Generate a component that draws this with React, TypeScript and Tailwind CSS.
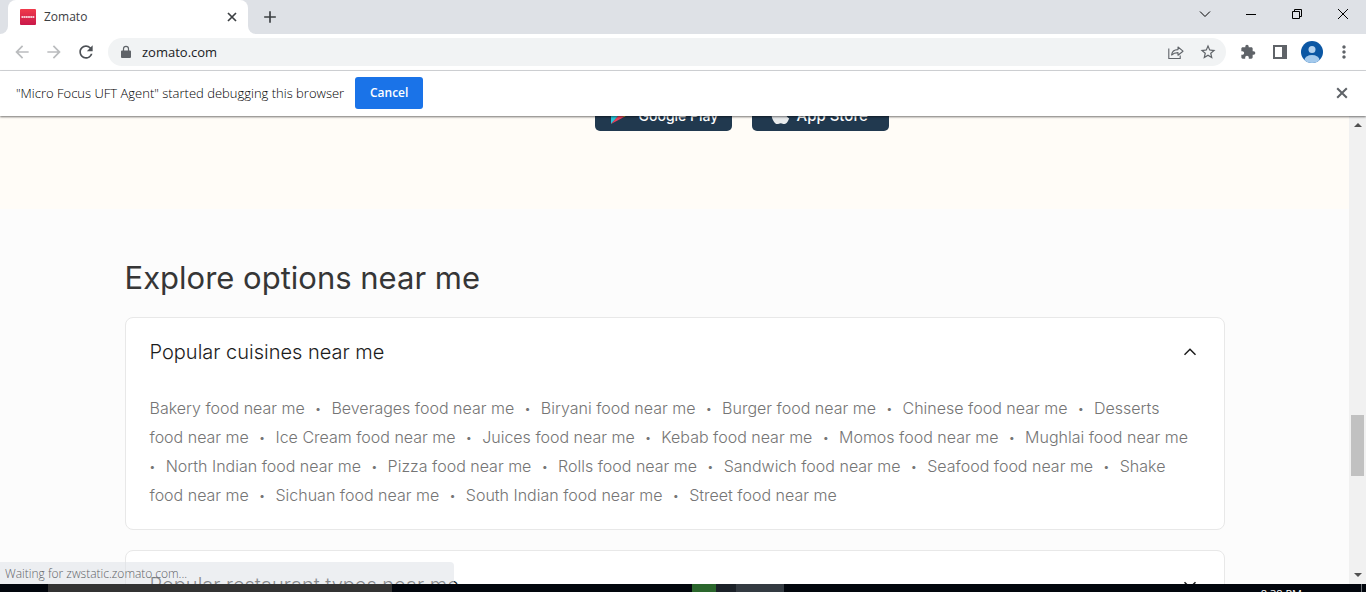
import { useState } from "react";
import {
  MdArrowBack,
  MdArrowForward,
  MdExtension,
  MdMoreVert,
  MdAdd,
  MdRefresh,
  MdStarBorder,
} from "react-icons/md";

const cuisines = [
  "Bakery",
  "Beverages",
  "Biryani",
  "Burger",
  "Chinese",
  "Desserts",
  "Ice Cream",
  "Juices",
  "Kebab",
  "Momos",
  "Mughlai",
  "North Indian",
  "Pizza",
  "Rolls",
  "Sandwich",
  "Seafood",
  "Shake",
  "Sichuan",
  "South Indian",
  "Street",
];

function Cross({ size }: { size: number }) {
  return (
    <svg width={size} height={size} viewBox="0 0 10 10" fill="none" stroke="currentColor" strokeWidth="1.7" aria-hidden="true">
      <path d="M1 1l8 8M9 1L1 9" />
    </svg>
  );
}

function TabStrip() {
  return (
    <header className="flex h-[34px] shrink-0 items-end bg-[#dee1e6]">
      <div className="flex h-full w-2 shrink-0 items-end bg-white">
        <div className="h-full w-full rounded-br-lg bg-[#dee1e6]" />
      </div>
      <div className="h-full">
        <div className="flex h-full w-60 items-center rounded-t-lg bg-white pr-2 pl-3">
          <Favicon />
          <span className="ml-2 flex-1 text-[12px] text-[#3c4043]">Zomato</span>
          <button type="button" aria-label="Close tab" className="grid size-4 place-items-center text-[#3c4043]">
            <Cross size={10} />
          </button>
        </div>
      </div>
      <div className="h-full w-2 shrink-0 bg-white">
        <div className="h-full w-full rounded-bl-lg bg-[#dee1e6]" />
      </div>
      <button type="button" aria-label="New tab" className="ml-1 grid h-full w-5 place-items-center text-[#3c4043]">
        <MdAdd size={20} />
      </button>
      <div className="ml-auto flex h-full items-center pb-1.5 text-black">
        <button type="button" aria-label="Search tabs" className="grid h-full w-[46px] place-items-center">
          <svg width="12" height="12" viewBox="0 0 12 12" fill="none" stroke="currentColor">
            <path d="M1 3.5l5 5 5-5" />
          </svg>
        </button>
        <button type="button" aria-label="Minimize" className="grid h-full w-[46px] place-items-center">
          <svg width="12" height="12" viewBox="0 0 12 12" fill="currentColor">
            <path d="M1 6h10v1H1z" />
          </svg>
        </button>
        <button type="button" aria-label="Restore" className="grid h-full w-[46px] place-items-center">
          <svg width="12" height="12" viewBox="0 0 12 12" fill="none" stroke="currentColor">
            <path d="M1.5 3.5h7v7h-7zM3.5 3.5v-2h7v7h-2" />
          </svg>
        </button>
        <button type="button" aria-label="Close window" className="grid h-full w-[46px] place-items-center">
          <svg width="12" height="12" viewBox="0 0 12 12" fill="none" stroke="currentColor">
            <path d="M1 1l10 10M11 1L1 11" />
          </svg>
        </button>
      </div>
    </header>
  );
}

function Favicon() {
  return (
    <svg width="16" height="16" viewBox="0 0 16 16" aria-hidden="true">
      <defs>
        <linearGradient id="fav" x1="0" y1="0" x2="0" y2="1">
          <stop offset="0" stopColor="#f03a4b" />
          <stop offset="1" stopColor="#c9184a" />
        </linearGradient>
      </defs>
      <rect width="16" height="16" rx="1" fill="url(#fav)" />
      <path d="M1.500 8h13" stroke="#fff" strokeOpacity="0.75" strokeWidth="1.800" strokeDasharray="1.800 .4" />
    </svg>
  );
}

function Toolbar() {
  return (
    <nav aria-label="Browser" className="flex h-[37px] shrink-0 items-center border-b border-[#d5d7da] bg-white px-3">
      <button type="button" aria-label="Back" className="grid size-5 place-items-center text-[#babcbe]">
        <MdArrowBack size={20} />
      </button>
      <button type="button" aria-label="Forward" className="ml-3 grid size-5 place-items-center text-[#babcbe]">
        <MdArrowForward size={20} />
      </button>
      <button type="button" aria-label="Reload" className="ml-3 grid size-5 place-items-center text-[#4d5156]">
        <MdRefresh size={20} />
      </button>
      <div className="ml-3 flex h-7 flex-1 items-center rounded-full bg-[#f1f3f4] pr-2 pl-3 text-[#5f6368]">
        <svg width="12" height="14" viewBox="0 0 12 14" aria-hidden="true">
          <path d="M2 5.500h8a1 1 0 0 1 1 1V12a1 1 0 0 1-1 1H2a1 1 0 0 1-1-1V6.500a1 1 0 0 1 1-1z" fill="currentColor" />
          <path d="M3.500 6V3.800a2.500 2.500 0 0 1 5 0V6" fill="none" stroke="currentColor" strokeWidth="1.200" />
        </svg>
        <input
          aria-label="Address"
          defaultValue="zomato.com"
          className="ml-[10px] h-full min-w-0 flex-1 bg-transparent text-[13px] text-[#202124] outline-none"
        />
        <button type="button" aria-label="Share" className="mr-[14px] grid size-4 place-items-center">
          <svg width="16" height="16" viewBox="0 0 16 16" fill="none" stroke="currentColor" strokeWidth="1.1">
            <path d="M.8 4.500v10h11.400V11.500" />
            <path d="M3.600 11c.3-3.600 2.600-5.300 6.400-5.400V3l5 4.200-5 4V8.600c-2.800 0-4.800.7-6.400 2.400z" strokeLinejoin="round" />
          </svg>
        </button>
        <button type="button" aria-label="Bookmark" className="grid size-5 place-items-center">
          <MdStarBorder size={18} />
        </button>
      </div>
      <button type="button" aria-label="Extensions" className="ml-3 grid size-5 place-items-center text-[#5f6368]">
        <MdExtension size={16} />
      </button>
      <button type="button" aria-label="Side panel" className="ml-3 grid size-5 place-items-center text-[#5f6368]">
        <svg width="14" height="14" viewBox="0 0 14 14">
          <path d="M0 0h14v14H0z" fill="currentColor" />
          <path d="M2 2h7v10H2z" fill="#fff" />
        </svg>
      </button>
      <button type="button" aria-label="Profile" className="ml-[11px] grid size-[22px] place-items-center">
        <svg width="22" height="22" viewBox="0 0 22 22">
          <defs>
            <clipPath id="avatar">
              <circle cx="11" cy="11" r="11" />
            </clipPath>
          </defs>
          <g clipPath="url(#avatar)">
            <path d="M0 0h22v22H0z" fill="#0b57a4" />
            <circle cx="11" cy="8.500" r="3.500" fill="#b4d2ee" />
            <ellipse cx="11" cy="19" rx="7.500" ry="5" fill="#a3c9ec" />
          </g>
        </svg>
      </button>
      <button type="button" aria-label="Menu" className="ml-[11px] grid size-5 place-items-center text-[#5f6368]">
        <MdMoreVert size={20} />
      </button>
    </nav>
  );
}

function InfoBar() {
  return (
    <section className="relative z-10 flex h-[45px] shrink-0 items-start bg-white px-4 pt-1.5 shadow-[0_1px_2px_rgba(0,0,0,0.55)]">
      <p className="text-[13px] leading-8 font-light text-black">"Micro Focus UFT Agent" started debugging this browser</p>
      <button
        type="button"
        className="ml-[11px] h-8 w-[68px] rounded-[3px] bg-[#1a73e8] text-[12px] font-semibold text-white"
      >
        Cancel
      </button>
      <button type="button" aria-label="Dismiss" className="ml-auto grid h-8 w-4 place-items-center text-[#5f6368]">
        <Cross size={12} />
      </button>
    </section>
  );
}

function StoreBadges() {
  return (
    <div className="-mt-[25px] flex gap-5 pl-[470px] text-[15px] leading-5 font-medium text-white">
      <a href="#play" className="flex h-10 w-[137px] items-end rounded-[5px] bg-[#21394f] pb-[5px] pl-4">
        <svg width="18" height="20" viewBox="0 0 18 20" className="mb-[2px] shrink-0" aria-hidden="true">
          <path d="M0 0v20l9-10z" fill="#27c4d9" />
          <path d="M0 20l9-10 4 3z" fill="#e9435e" />
          <path d="M0 0l9 10 4-3z" fill="#32bb6e" />
          <path d="M13 7l5 3-5 3-4-3z" fill="#f7b916" />
        </svg>
        <span className="ml-[10px] text-[14px] whitespace-nowrap">Google Play</span>
      </a>
      <a href="#apple" className="flex h-10 w-[137px] items-end rounded-[5px] bg-[#21394f] pb-[5px] pl-4">
        <svg width="22" height="24" viewBox="0 0 22 24" className="mb-px shrink-0 text-[#e8ebed]" aria-hidden="true">
          <path
            d="M18 12.700c0-2.500 2-3.700 2.200-3.800-1.300-1.800-3.200-2.100-3.900-2.100-1.700-.2-3.200 1-4 1s-2.100-1-3.500-1C7 6.900 5.300 7.900 4.400 9.500c-1.900 3.300-.5 8.200 1.400 10.900.9 1.300 2 2.800 3.400 2.700s1.900-.9 3.600-.9 2.100.9 3.600.8 2.400-1.300 3.300-2.600c1-1.500 1.500-3 1.500-3.100-.1 0-3.200-1.200-3.200-4.600zM15.500 5.200c.7-.9 1.200-2.200 1.100-3.400-1.100 0-2.400.7-3.200 1.600-.7.800-1.300 2.100-1.100 3.300 1.200.1 2.400-.6 3.200-1.500z"
            fill="currentColor"
          />
        </svg>
        <span className="ml-[7px] whitespace-nowrap">App Store</span>
      </a>
    </div>
  );
}

function Chevron({ open }: { open: boolean }) {
  return (
    <svg width="14" height="8" viewBox="0 0 14 8" fill="none" stroke="#1c1c1c" strokeWidth="1.500" aria-hidden="true">
      <path d={open ? "M1.500 6.800L7 1.300l5.500 5.500" : "M1.500 1.200L7 6.700l5.500-5.500"} />
    </svg>
  );
}

function Accordion({ title, items, initial }: { title: string; items: string[]; initial: boolean }) {
  const [open, setOpen] = useState(initial);
  return (
    <section className="rounded-lg border border-[#e8e8e8] bg-white px-6">
      <h3>
        <button
          type="button"
          aria-expanded={open}
          onClick={() => setOpen(!open)}
          className="flex h-[67px] w-full items-center justify-between pr-[3px] text-left text-[20px] font-light text-[#1c1c1c]"
        >
          {title}
          <Chevron open={open} />
        </button>
      </h3>
      {open && (
        <p className="pt-[9px] pr-1 pb-[19px] text-[16px] leading-[29px] font-light text-[#757575]">
          {items.map((name, i) => (
            <span key={name}>
              <a href="#cuisine" className={i < items.length - 1 ? "pr-[6px]" : ""}>
                {name} food near me
              </a>
              {i < items.length - 1 && (
                <>
                  {" "}
                  <span className="pr-1.5 align-[2px] text-[10px] leading-none font-normal">•</span>{" "}
                </>
              )}
            </span>
          ))}
        </p>
      )}
    </section>
  );
}

function ScrollBar() {
  return (
    <div className="flex w-[17px] shrink-0 flex-col items-center bg-[#f1f1f1] py-[7px]" aria-hidden="true">
      <svg width="8" height="4" viewBox="0 0 8 4">
        <path d="M0 4l4-4 4 4z" fill="#505050" />
      </svg>
      <div className="flex w-full flex-1 flex-col px-[2px]">
        <div className="flex-[288]" />
        <div className="flex-[61] bg-[#c1c1c1]" />
        <div className="flex-[97]" />
      </div>
      <svg width="8" height="4" viewBox="0 0 8 4">
        <path d="M0 0l4 4 4-4z" fill="#505050" />
      </svg>
    </div>
  );
}

function Taskbar() {
  return (
    <footer className="flex h-2 shrink-0 overflow-hidden bg-[#02060d]">
      <div className="ml-12 h-full w-[344px] bg-[#333333]" />
      <div className="ml-[300px] h-full w-6 bg-[#2a662c]" />
      <div className="h-full w-5 bg-[#1b2128]" />
      <div className="h-full w-12 bg-[#333a41]" />
      <span className="mr-[59px] ml-auto pt-[3px] text-[11px] leading-[14px] text-white">8:38 PM</span>
      <div className="mr-1 h-full w-px bg-[#6b6f75]" />
    </footer>
  );
}

export default function App() {
  return (
    <div className="flex h-screen flex-col overflow-hidden bg-white font-['Open_Sans','Noto_Sans',sans-serif]">
      <TabStrip />
      <Toolbar />
      <InfoBar />
      <div className="relative flex min-h-0 flex-1">
        <main className="min-w-0 flex-1 overflow-hidden bg-[#fcfcfc] font-['Inter',sans-serif]">
          <div className="flow-root bg-[#fffcf7] pb-[78px]">
            <div className="mx-auto max-w-[1100px]">
              <StoreBadges />
            </div>
          </div>
          <div className="mx-auto flex max-w-[1100px] flex-col pt-[45px]">
            <h2 className="mb-[15px] text-[31px] leading-[48px] text-[#363636]">Explore options near me</h2>
            <div className="flex flex-col gap-5">
              <Accordion title="Popular cuisines near me" items={cuisines} initial />
              <Accordion title="Popular restaurant types near me" items={[]} initial={false} />
            </div>
          </div>
        </main>
        <ScrollBar />
        <div
          role="status"
          className="absolute bottom-0 left-0 h-[22px] w-[454px] rounded-tr bg-[#dfe1e8]/55 pl-[5px] text-[12px] leading-6 font-light text-[#5f6368]"
        >
          Waiting for zwstatic.zomato.com...
        </div>
      </div>
      <Taskbar />
    </div>
  );
}
